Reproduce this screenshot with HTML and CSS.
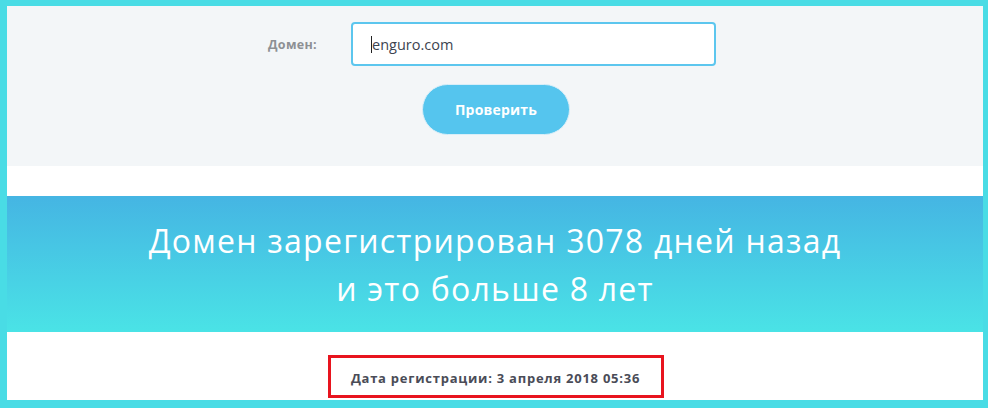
FILE: index.html
```html
<!DOCTYPE html>
<html lang="ru">
<head>
<meta charset="utf-8">
<title>Проверка домена</title>
<link rel="stylesheet" href="styles.css">
</head>
<body>
<div class="frame">
  <section class="search">
    <form class="form-row">
      <label class="label" for="domain">Домен:</label>
      <div class="input"><span class="caret"></span>enguro.com</div>
    </form>
    <div class="actions">
      <button class="btn" type="button">Проверить</button>
    </div>
  </section>
  <div class="spacer"></div>
  <section class="band">
    <h1 class="headline">Домен зарегистрирован 3078 дней назад<br>и это больше 8 лет</h1>
  </section>
  <section class="details">
    <div class="date-box">Дата регистрации: 3 апреля 2018 05:36</div>
  </section>
</div>
</body>
</html>
```
FILE: styles.css
```css
html, body {
  margin: 0;
  padding: 0;
  background: #49dce5;
}
body {
  font-family: "Open Sans", "Noto Sans", sans-serif;
}
.frame {
  box-sizing: border-box;
  width: 988px;
  height: 408px;
  border-style: solid;
  border-color: #49dce5;
  border-width: 6px 5px 8px 7px;
  background: #ffffff;
  display: flex;
  flex-direction: column;
}
.search {
  background: #f3f6f8;
  height: 160px;
  box-sizing: border-box;
  padding-top: 16px;
}
.form-row {
  margin: 0;
  display: flex;
  align-items: center;
  justify-content: center;
  gap: 33px;
  padding-right: 6px;
}
.label {
  width: 50px;
  font-size: 12.5px;
  font-weight: 700;
  letter-spacing: 0.3px;
  color: #8d9094;
  white-space: nowrap;
}
.input {
  box-sizing: border-box;
  width: 365px;
  height: 44px;
  border: 2px solid #5cc6ee;
  border-radius: 4px;
  background: #ffffff;
  display: flex;
  align-items: center;
  padding-left: 18px;
  font-size: 14.5px;
  color: #3d4450;
}
.caret {
  display: inline-block;
  width: 1px;
  height: 17px;
  background: #222;
}
.actions {
  display: flex;
  justify-content: center;
  margin-top: 18px;
  padding-left: 2px;
}
.btn {
  width: 148px;
  height: 51px;
  border: 1px solid #d8eef8;
  border-radius: 26px;
  background: #55c5ee;
  color: #ffffff;
  font-family: "Open Sans", "Noto Sans", sans-serif;
  font-size: 14px;
  font-weight: 700;
  letter-spacing: 0.2px;
  cursor: pointer;
}
.spacer {
  height: 30px;
}
.band {
  height: 136px;
  box-sizing: border-box;
  padding-top: 21px;
  background: linear-gradient(to bottom, #45b5e3, #4ae3e6);
}
.headline {
  margin: 0;
  text-align: center;
  color: #ffffff;
  font-weight: 400;
  font-size: 32px;
  line-height: 48px;
  letter-spacing: 1.25px;
}
.details {
  flex: 1;
  display: flex;
  justify-content: center;
  align-items: flex-start;
  padding-top: 23px;
  padding-left: 1px;
}
.date-box {
  box-sizing: border-box;
  width: 336px;
  height: 43px;
  border: 3px solid #e8141e;
  display: flex;
  align-items: center;
  justify-content: center;
  padding-top: 3px;
  font-size: 13px;
  font-weight: 700;
  letter-spacing: 0.75px;
  color: #4a4c57;
}
```
